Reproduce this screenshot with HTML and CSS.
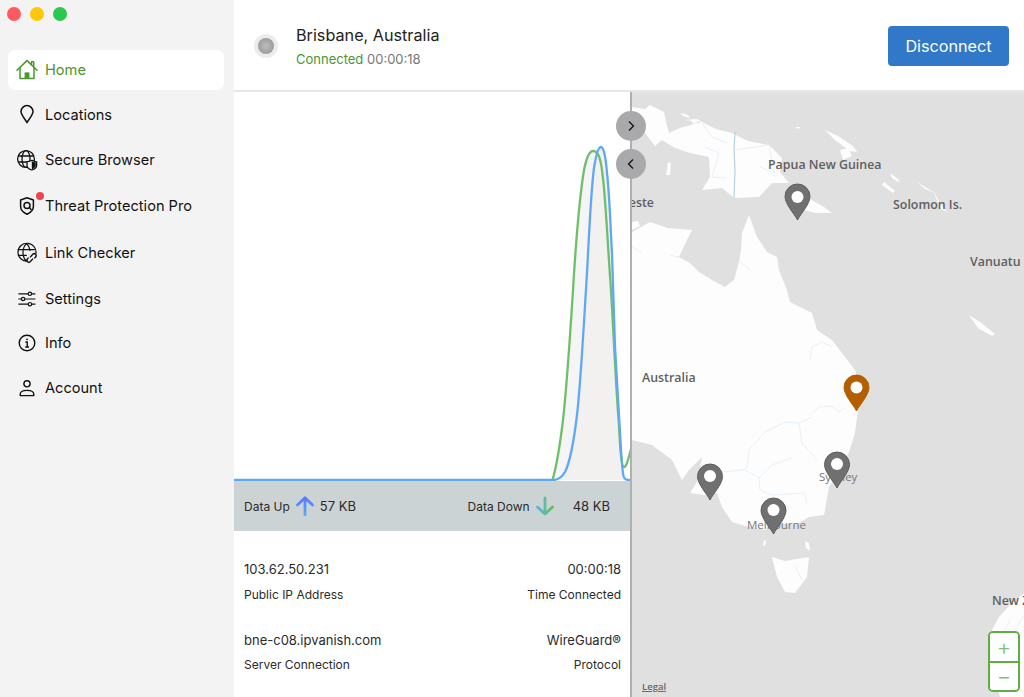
FILE: index.html
```html
<!DOCTYPE html>
<html lang="en">
<head>
<meta charset="utf-8">
<title>IPVanish</title>
<link rel="stylesheet" href="styles.css">
</head>
<body>
<div class="app">
  <aside class="sidebar">
    <div class="lights"><span class="light red"></span><span class="light yellow"></span><span class="light green"></span></div>
    <nav class="nav">
      <a class="item active">
        <svg class="icon" viewBox="0 0 22 22" fill="none" stroke="currentColor" stroke-width="1.500" stroke-linejoin="round" stroke-linecap="round"><path d="M1 11.200 11 1.600l10 9.600"/><path d="M15.500 5V2.800h2.200v4.400"/><path d="M4 9v10.600h14V9"/><rect x="8.600" y="13.400" width="4.800" height="6.200" fill="currentColor" stroke="none"/></svg>
        <span>Home</span>
      </a>
      <a class="item">
        <svg class="icon" viewBox="0 0 22 22" fill="none" stroke="currentColor" stroke-width="1.500" stroke-linejoin="round"><path d="M11 18.600C9 15 5 11 5 7.600a6 6 0 0 1 12 0c0 3.400-4 7.400-6 11Z"/></svg>
        <span>Locations</span>
      </a>
      <a class="item">
        <svg class="icon" viewBox="0 0 22 22" fill="none" stroke="currentColor" stroke-width="1.300"><circle cx="10" cy="10" r="8.400"/><ellipse cx="10" cy="10" rx="4" ry="8.400"/><path d="M2 7h16M2 13h16"/><path d="M15.800 11.400 20.600 13v3.400c0 2.400-2.400 3.800-4.800 4.600-2.400-.8-4.800-2.200-4.800-4.600V13Z" fill="#f3f3f3" stroke-width="1.300"/><path d="M15.800 12.400 19.800 13.600v2.800c0 1.900-2 3.100-4 3.800Z" fill="currentColor" stroke="none"/></svg>
        <span>Secure Browser</span>
      </a>
      <a class="item threat">
        <svg class="icon" viewBox="0 0 22 22" fill="none" stroke="currentColor" stroke-width="1.500" stroke-linejoin="round"><path d="M11 2.800 17.400 5v6.500c0 3.800-3 6.200-6.400 7.700-3.400-1.500-6.400-3.900-6.400-7.700V5Z"/><circle cx="11" cy="10.400" r="3"/><path d="M13.400 12.400 15.400 15"/></svg>
        <span class="dot"></span>
        <span>Threat Protection Pro</span>
      </a>
      <a class="item link">
        <svg class="icon" viewBox="0 0 22 22" fill="none" stroke="currentColor" stroke-width="1.200"><path d="M12 19.200a9 9 0 1 1 7.800-7"/><path d="M10.500 1.600C7.800 4 7 7 7 10.500s.8 6.500 3.500 8.700M10.500 1.600c2.300 2 3.300 4.500 3.500 7.400M1.800 7.600h17M1.800 13.400h9"/><path d="M14 15.400l2.800-3.200a2 2 0 0 1 3 2.600l-1.400 1.600M17 16.600l-2.800 3.200a2 2 0 0 1-3-2.600l1.400-1.600" stroke-width="1.400"/></svg>
        <span>Link Checker</span>
      </a>
      <a class="item settings">
        <svg class="icon" viewBox="0 0 22 22" fill="none" stroke="currentColor" stroke-width="1.200"><path d="M2.400 5.800h9.800M15.600 5.800h3.800M2.400 11h3M8.800 11h10.600M2.400 16.200h9.800M15.600 16.200h3.800"/><circle cx="13.900" cy="5.800" r="1.700"/><circle cx="7.100" cy="11" r="1.700"/><circle cx="13.900" cy="16.200" r="1.700"/></svg>
        <span>Settings</span>
      </a>
      <a class="item info">
        <svg class="icon" viewBox="0 0 22 22" fill="none" stroke="currentColor" stroke-width="1.400"><circle cx="11" cy="11" r="7.800"/><circle cx="11" cy="7.300" r=".9" fill="currentColor" stroke="none"/><path d="M9.400 10h1.800v5M9.200 15h3.800"/></svg>
        <span>Info</span>
      </a>
      <a class="item">
        <svg class="icon" viewBox="0 0 22 22" fill="none" stroke="currentColor" stroke-width="1.400" stroke-linejoin="round"><circle cx="11" cy="6.800" r="3.100"/><path d="M4.200 18.600v-1.200c0-2.600 3-4 6.800-4s6.800 1.400 6.800 4v1.200Z"/></svg>
        <span>Account</span>
      </a>
    </nav>
  </aside>
  <main class="main">
    <header class="topbar">
      <div class="status-dot"><span class="status-core"></span></div>
      <div class="status-text">
        <div class="place">Brisbane, Australia</div>
        <div class="state"><span class="connected">Connected</span> <span class="elapsed">00:00:18</span></div>
      </div>
      <button class="disconnect">Disconnect</button>
    </header>
    <div class="content">
      <section class="stats">
        <svg class="chart" viewBox="234 92 396 389" preserveAspectRatio="none">
          <path class="area-outer" d="M552.500 480C556 468 560 445 563 420C567 385 570 337 573 290C576 240 579 200 584 170C586 160 589 151 593 151L601 147C604 147 606 160 607 173C610 200 611 240 612 253C613 280 614 320 615 347C617 380 619 420 620 433C621 450 622 470 623.500 480Z"/>
          <path class="area" d="M553 480C558 480 562 477 565 472C570 462 574 440 577 415C581 380 584 320 587 273C589 235 591 190 594 168C596 155 598 147 601 147C604 147 606 160 607 173C610 200 611 240 612 253C613 280 614 320 615 347C617 380 619 420 620 433C621 450 622 470 623.500 480Z"/>
          <path class="green-line" d="M552.500 480C556 468 560 445 563 420C567 385 570 337 573 290C576 240 579 200 584 170C586 160 589 151 593 151C599 151 601 160 603 178C606 205 608 250 611 290C614 340 616 390 619 425C620 445 621 467 624 467C627 467 629 455 632 446"/>
          <path class="blue-line" d="M234 480H553C558 480 562 477 565 472C570 462 574 440 577 415C581 380 584 320 587 273C589 235 591 190 594 168C596 155 598 147 601 147C604 147 606 160 607 173C610 200 611 240 612 253C613 280 614 320 615 347C617 380 619 420 620 433C621 450 622 470 623.500 476C624.500 480 626 480 632 480"/>
        </svg>
        <div class="band">
          <div class="band-group up">
            <span>Data Up</span>
            <svg class="arrow" viewBox="0 0 18 20"><defs><linearGradient id="ga" x1="0" y1="0" x2="0" y2="1"><stop offset="0" stop-color="#5a78ff"/><stop offset="1" stop-color="#5aa8f8"/></linearGradient></defs><path d="M1.500 9 9 1.800 16.500 9M9 2v17" fill="none" stroke="url(#ga)" stroke-width="2.800" stroke-linecap="round" stroke-linejoin="round"/></svg>
            <span class="num">57 KB</span>
          </div>
          <div class="band-group down">
            <span>Data Down</span>
            <svg class="arrow" viewBox="0 0 18 20"><defs><linearGradient id="gb" x1="0" y1="0" x2="1" y2="0" gradientUnits="objectBoundingBox"><stop offset="0" stop-color="#62aef0"/><stop offset="1" stop-color="#62c050"/></linearGradient></defs><path d="M1.500 11 9 18 16.500 11" fill="none" stroke="url(#gb)" stroke-width="2.800" stroke-linecap="round" stroke-linejoin="round"/><path d="M9 2v15" fill="none" stroke="#62bc9c" stroke-width="2.800" stroke-linecap="round"/></svg>
            <span class="num">48 KB</span>
          </div>
        </div>
        <div class="facts">
          <div class="fact"><div class="value">103.62.50.231</div><div class="label">Public IP Address</div></div>
          <div class="fact right"><div class="value">00:00:18</div><div class="label">Time Connected</div></div>
          <div class="fact"><div class="value">bne-c08.ipvanish.com</div><div class="label">Server Connection</div></div>
          <div class="fact right"><div class="value">WireGuard®</div><div class="label">Protocol</div></div>
        </div>
      </section>
      <section class="map">
        <svg class="map-art" viewBox="632 92 392 605">
          <rect class="sea" x="632" y="92" width="392" height="605"/>
          <g class="land">
            <path d="M632 107 645 109 650 105 664 112 666 122 669 133 680 128 702 122 716 129 732 133 748 141 769 145 782 158 780 172 789 183 772 183 759 197 734 198 722 188 702 190 710 177 709 157 690 153 675 148 662 140 655 146 645 133 632 130Z"/>
            <path d="M798 198 810 199 824 207 832 213 815 213 800 209Z"/>
            <path d="M632 232 650 222 668 228 692 230 685 244 679 257 690 263 699 272 712 280 725 287 734 280 739 262 741 250 742 233 749 215 757 237 767 252 777 257 779 270 787 290 790 302 812 313 817 330 832 340 845 357 855 370 860 385 859 403 855 433 849 452 840 470 829 487 824 515 809 517 795 525 779 523 765 530 749 527 732 522 722 507 717 493 705 495 690 493 698 480 702 457 689 470 682 480 672 460 652 445 632 440Z"/>
            <path d="M772 557 785 561 809 557 807 577 795 593 785 592 777 577Z"/>
            <path d="M764 540 766 541 765 546 763 545Z"/>
            <path d="M805 541 809 543 810 551 806 548Z"/>
            <path d="M992 630 999 617 1010 605 1024 593V697H1000L992 660Z"/>
            <path d="M969 315 980 322 995 334 992 336 978 328Z"/>
            <path d="M825 130 838 136 853 146 857 152 850 151 835 140Z"/>
            <path d="M840 150 848 148 852 156 843 160Z"/>
            <path d="M890 173 898 179 900 183 892 178Z"/>
            <path d="M884 182 895 191 893 193 882 185Z"/>
            <path d="M916 181 925 187 935 193 925 189Z"/>
            <path d="M933 190 940 203 948 213 940 208Z"/>
            <path d="M697 119 702 122 685 120Z"/>
            <path d="M680 113 688 115 690 118 683 116Z"/>
            <path d="M668 162 671 163 670 175 666 175Z"/>
            <path d="M632 222 638 221 640 226 632 230Z"/>
            <path d="M690 120 698 122 694 124Z"/>
            <path d="M795 127 800 127 799 129Z"/>
          </g>
          <g class="rivers">
            <path d="M812 417 799 423 785 422 765 432 749 450 747 467 744 470 722 472"/>
            <path d="M799 423 802 443 817 460"/>
            <path d="M792 458 772 465 759 478 745 470"/>
            <path d="M759 478 760 490 772 495 804 493 807 503"/>
            <path d="M812 413 819 407 832 406 839 412 844 408"/>
            <path d="M702 123 712 137 727 143"/>
            <path d="M705 147 719 153 712 177 727 178"/>
            <path d="M735 150 769 145 775 177M760 167 775 173"/>
            <path d="M810 360 812 347 822 342 832 347"/>
            <path d="M740 262 750 270M670 255 679 257M632 247 642 253"/>
            <path d="M795 565 802 580M1000 640 1010 620M1012 635 1024 615"/>
          </g>
          <path class="border-line" d="M735 132 734 150 735 170 734 198"/>
          <text class="m-label" x="768" y="169">Papua New Guinea</text>
          <text class="m-label" x="893" y="209">Solomon Is.</text>
          <text class="m-label" x="970" y="266">Vanuatu</text>
          <text class="m-label end" x="654" y="207">Timor-Leste</text>
          <text class="m-label" x="642" y="382">Australia</text>
          <text class="m-label" x="992" y="605">New Zealand</text>
          <text class="m-city" x="819" y="481">Sydney</text>
          <text class="m-city" x="747" y="529">Melbourne</text>
          <text class="m-legal" x="642" y="690">Legal</text>
          <g class="pin" transform="translate(797.500 220)"><path d="M0 0C-3-6-12.500-16-12.500-23.500A12.500 12.500 0 1 1 12.500-23.500C12.500-16 3-6 0 0Z"/><circle cy="-23" r="6"/></g>
          <g class="pin" transform="translate(837 488)"><path d="M0 0C-3-6-12.500-16-12.500-23.500A12.500 12.500 0 1 1 12.500-23.500C12.500-16 3-6 0 0Z"/><circle cy="-24" r="6"/></g>
          <g class="pin" transform="translate(710 500)"><path d="M0 0C-3-6-12.500-16-12.500-23.500A12.500 12.500 0 1 1 12.500-23.500C12.500-16 3-6 0 0Z"/><circle cy="-24" r="6"/></g>
          <g class="pin" transform="translate(773.500 534)"><path d="M0 0C-3-6-12.500-16-12.500-23.500A12.500 12.500 0 1 1 12.500-23.500C12.500-16 3-6 0 0Z"/><circle cy="-24" r="6"/></g>
          <g class="pin current" transform="translate(856.500 411)"><path d="M0 0C-3-6-12.500-16-12.500-23.500A12.500 12.500 0 1 1 12.500-23.500C12.500-16 3-6 0 0Z"/><circle cy="-23.500" r="6"/></g>
        </svg>
        <div class="zoom">
          <button class="zoom-btn">+</button>
          <button class="zoom-btn">−</button>
        </div>
      </section>
      <button class="toggle next"><svg viewBox="0 0 12 12"><path d="M4 1.500 8.500 6 4 10.500"/></svg></button>
      <button class="toggle prev"><svg viewBox="0 0 12 12"><path d="M8 1.500 3.500 6 8 10.500"/></svg></button>
    </div>
  </main>
</div>
</body>
</html>
```
FILE: styles.css
```css
* { box-sizing: border-box; }
html, body { margin: 0; height: 100%; overflow: hidden; }
body { font-family: Inter, "Liberation Sans", sans-serif; color: #111; background: #fff; }
.app { display: flex; height: 697px; }

.sidebar { width: 234px; flex: none; background: #f3f3f3; padding: 7px 10px 0 8px; }
.lights { display: flex; gap: 9px; height: 14px; margin-left: -1px; }
.light { width: 14px; height: 14px; border-radius: 50%; }
.red { background: #ff5a5f; }
.yellow { background: #ffc60a; }
.green { background: #2ac84f; }

.nav { display: flex; flex-direction: column; gap: 5px; margin-top: 29px; }
.item { position: relative; display: flex; align-items: center; gap: 7px; height: 40px; padding-left: 8px; border-radius: 7px; font-size: 14.600px; line-height: 18px; color: #111; }
.item.active { background: #fff; color: #4a962f; }
.item.threat { margin-top: 1px; }
.item.link { margin-top: 2px; }
.item.settings { margin-top: 1px; }
.item.info { margin-top: -1px; }
.icon { width: 22px; height: 22px; flex: none; }
.dot { position: absolute; left: 28px; top: 6px; width: 8px; height: 8px; border-radius: 50%; background: #f0434f; }

.main { flex: 1; min-width: 0; display: flex; flex-direction: column; }
.topbar { height: 92px; flex: none; display: flex; align-items: center; padding: 2px 15px 0 20px; border-bottom: 2px solid #e4e8e8; }
.status-dot { width: 24px; height: 24px; border-radius: 50%; background: #ececec; display: flex; align-items: center; justify-content: center; }
.status-core { width: 16px; height: 16px; border-radius: 50%; background: radial-gradient(circle, #bdbdbd 0, #8f8f8f 100%); }
.status-text { margin-left: 18px; }
.place { font-size: 16.200px; line-height: 22px; color: #222; }
.state { font-size: 13px; line-height: 18px; margin-top: 4px; }
.connected { color: #4a962f; }
.elapsed { color: #777; }
.disconnect { margin-left: auto; width: 121px; height: 40px; border: 0; border-radius: 4px; background: #3178c9; color: #fff; font: 16.200px Inter, "Liberation Sans", sans-serif; }

.content { position: relative; flex: 1; min-height: 0; display: flex; }
.stats { width: 396px; flex: none; display: flex; flex-direction: column; }
.chart { display: block; width: 396px; height: 389px; flex: none; }
.area-outer { fill: #f6f5f5; }
.area { fill: #f2f1f0; }
.green-line, .blue-line { fill: none; stroke-width: 2.300; }
.green-line { stroke: #6fbf6a; }
.blue-line { stroke: #5fa8f5; }

.band { height: 50px; flex: none; display: flex; align-items: center; justify-content: space-between; padding: 0 20px 0 10px; background: #ccd3d5; font-size: 12px; color: #2b2b2b; }
.band-group { display: flex; align-items: center; }
.arrow { width: 18px; height: 20px; flex: none; }
.up .arrow { margin: 0 6px; }
.down .arrow { margin: 0 19px 0 6px; }
.num { font-size: 13px; }

.facts { flex: 1; display: grid; grid-template-columns: 1fr 1fr; grid-auto-rows: 70.500px; padding: 29px 9px 0 10px; background: #fff; }
.fact { font-size: 12px; color: #2b2b2b; }
.fact.right { text-align: right; }
.value { font-size: 13px; line-height: 18px; }
.label { line-height: 18px; margin-top: 7.600px; }

.map { position: relative; flex: 1; min-width: 0; overflow: hidden; border-left: 2px solid #b0b0b0; }
.map-art { display: block; width: 392px; height: 605px; }
.sea { fill: #e0e0e0; }
.land path { fill: #fdfdfd; }
.rivers path { fill: none; stroke: #e6f1f9; stroke-width: 1; stroke-linejoin: round; }
.border-line { fill: none; stroke: #b5d2e4; stroke-width: 1.200; }
.m-label { font: 600 12.400px "Open Sans", "Liberation Sans", sans-serif; fill: #5f5f5f; }
.m-label.end { text-anchor: end; }
.m-city { font: 400 11.500px "Open Sans", "Liberation Sans", sans-serif; fill: #777; }
.m-legal { font: 600 9.500px "Open Sans", "Liberation Sans", sans-serif; fill: #666; text-decoration: underline; }
.pin path { fill: #707070; stroke: #5c5c5c; stroke-width: 1; }
.pin circle { fill: #fff; }
.pin.current path { fill: #b35f00; stroke: #b35f00; }

.zoom { position: absolute; right: 4px; bottom: 5px; width: 32px; height: 61px; display: flex; flex-direction: column; border: 2px solid #62ad3f; border-radius: 5px; background: #fff; overflow: hidden; }
.zoom-btn { flex: 1; border: 0; padding: 0; background: #fff; color: #7cc26b; font: 300 22px/1 Inter, "Liberation Sans", sans-serif; }
.zoom-btn + .zoom-btn { border-top: 2px solid #62ad3f; }

.toggle { position: absolute; left: 382px; width: 30px; height: 30px; padding: 0; border: 0; border-radius: 50%; background: #a9a9ab; display: flex; align-items: center; justify-content: center; }
.toggle svg { width: 12px; height: 12px; fill: none; stroke: #111; stroke-width: 1.300; }
.next { top: 19px; }
.prev { top: 57px; }
```
